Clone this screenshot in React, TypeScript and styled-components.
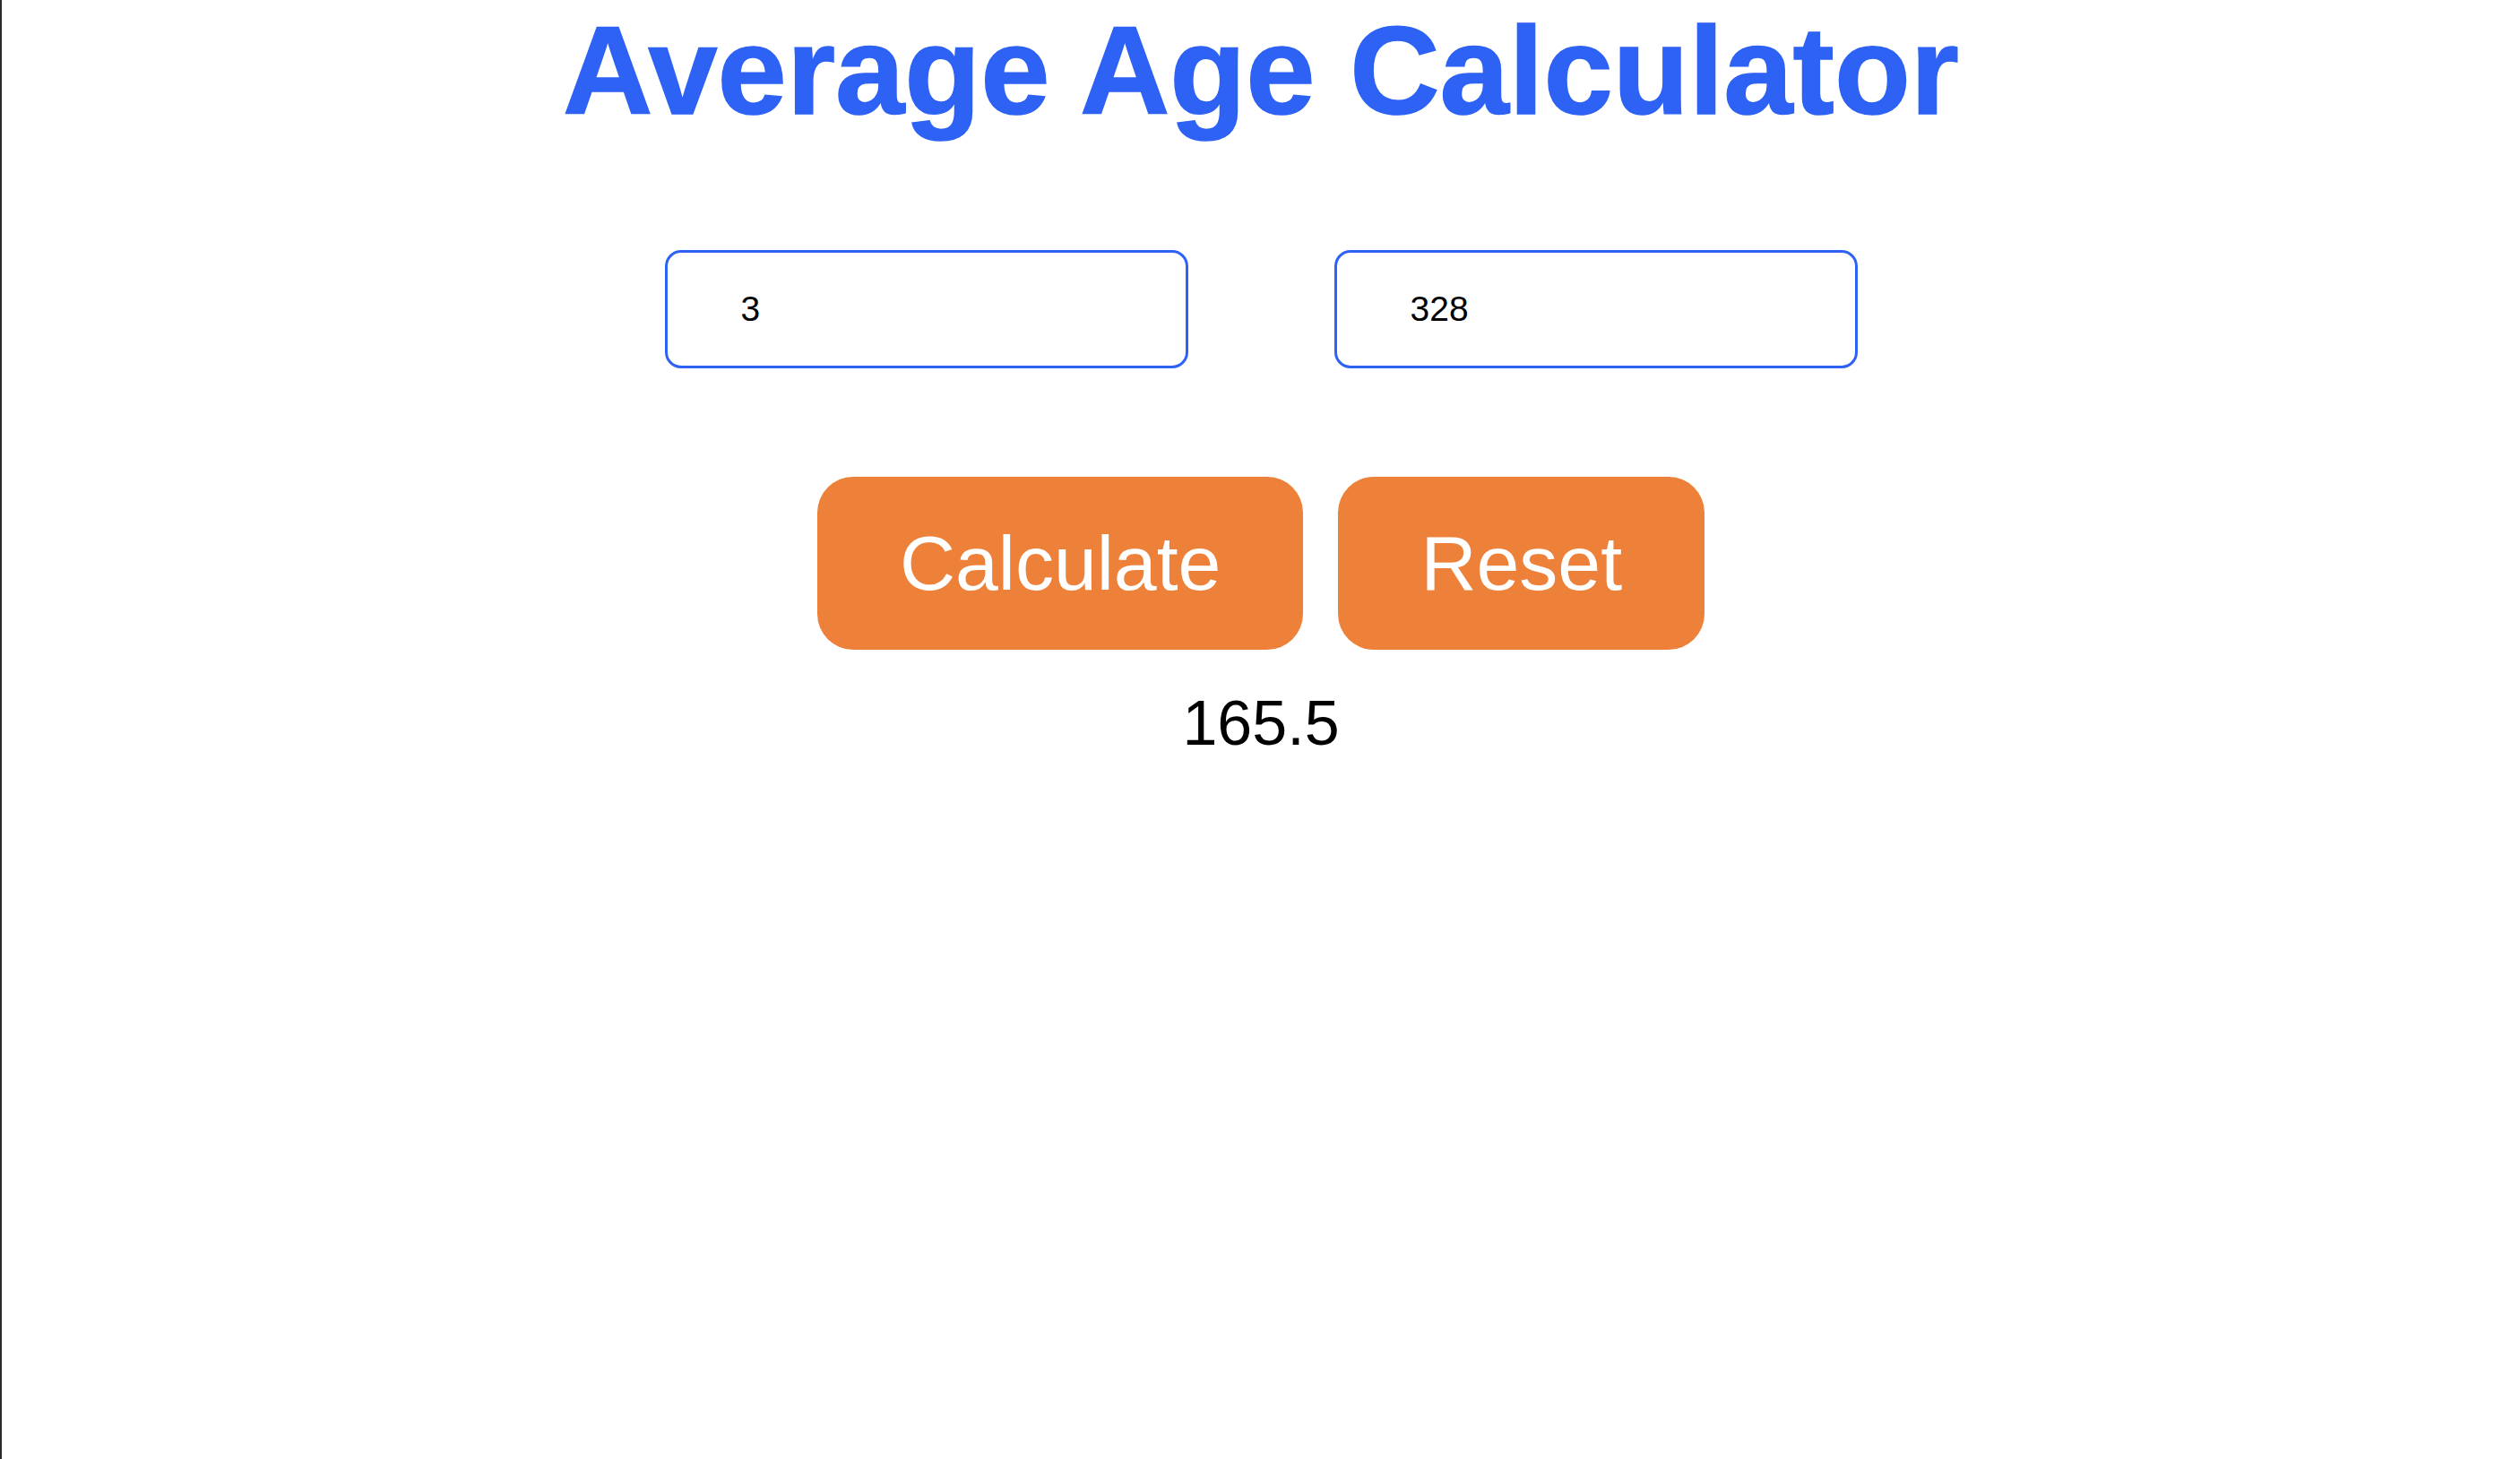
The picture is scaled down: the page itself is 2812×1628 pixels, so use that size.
import { useState } from "react";
import styled, { createGlobalStyle } from "styled-components";

const GlobalStyle = createGlobalStyle`
  html, body {
    margin: 0;
    padding: 0;
    background: #ffffff;
  }

  body {
    font-family: "Liberation Sans", Arial, sans-serif;
  }
`;

const Page = styled.div`
  min-height: 100vh;
  box-sizing: border-box;
  border-left: 2px solid #2b2b2b;
  display: flex;
  flex-direction: column;
  align-items: center;
`;

const Title = styled.h1`
  margin: -1px 0 0;
  font-size: 139px;
  line-height: 160px;
  font-weight: 700;
  color: #2d62f4;
  -webkit-text-stroke: 1.5px #2d62f4;
  white-space: nowrap;
`;

const InputRow = styled.div`
  display: flex;
  gap: 163px;
  margin-top: 120px;
`;

const AgeInput = styled.input`
  box-sizing: border-box;
  width: 584px;
  height: 132px;
  padding: 0 0 0 82px;
  border: 3px solid #2d62f4;
  border-radius: 18px;
  font-family: "Liberation Sans", Arial, sans-serif;
  font-size: 39px;
  color: #000;
  background: #fff;
  outline: none;
`;

const ButtonRow = styled.div`
  display: flex;
  gap: 39px;
  margin-top: 121px;
`;

const ActionButton = styled.button`
  height: 193px;
  padding: 0 92px;
  border: none;
  border-radius: 40px;
  background: #ee8139;
  color: #ffffff;
  font-family: "Liberation Sans", Arial, sans-serif;
  font-size: 86px;
  cursor: pointer;
`;

const Result = styled.div`
  margin-top: 42px;
  font-size: 70px;
  line-height: 80px;
  color: #000;
`;

export default function App() {
  const [first, setFirst] = useState("3");
  const [second, setSecond] = useState("328");
  const [result, setResult] = useState<string>("165.5");

  function handleCalculate() {
    const a = parseFloat(first);
    const b = parseFloat(second);
    if (isNaN(a) || isNaN(b)) return;
    setResult(String((a + b) / 2));
  }

  function handleReset() {
    setFirst("");
    setSecond("");
    setResult("");
  }

  return (
    <>
      <GlobalStyle />
      <Page>
        <Title>Average Age Calculator</Title>

        <InputRow>
          <AgeInput value={first} onChange={(e) => setFirst(e.target.value)} />
          <AgeInput
            value={second}
            onChange={(e) => setSecond(e.target.value)}
          />
        </InputRow>

        <ButtonRow>
          <ActionButton onClick={handleCalculate}>Calculate</ActionButton>
          <ActionButton onClick={handleReset}>Reset</ActionButton>
        </ButtonRow>

        <Result>{result}</Result>
      </Page>
    </>
  );
}
